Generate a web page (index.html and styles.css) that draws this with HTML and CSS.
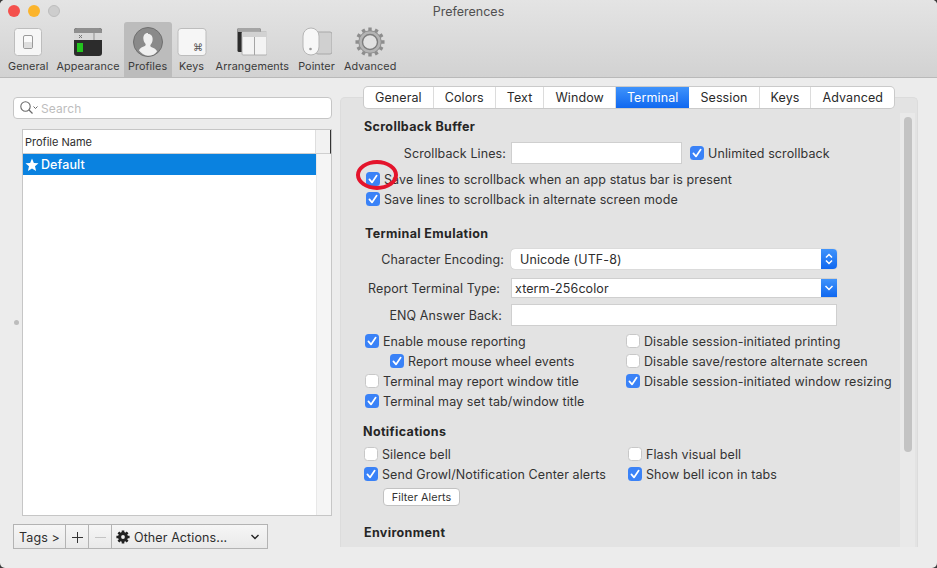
FILE: index.html
```html
<!DOCTYPE html>
<html lang="en">
  <head>
    <meta charset="UTF-8" />
    <meta name="viewport" content="width=device-width, initial-scale=1.0" />
    <title>Preferences</title>
    <link rel="stylesheet" href="styles.css">
  </head>
  <body>
    <svg class="defs" width="0" height="0">
      <symbol id="check" viewBox="0 0 14 14">
        <path d="M3.4 7.4 6 10.4 10.7 3.6" fill="none" stroke="#fff" stroke-width="1.7" stroke-linecap="round" stroke-linejoin="round" />
      </symbol>
    </svg>

    <div class="window">
      <header class="toolbar">
        <div class="titlebar">
          <div class="lights">
            <span class="light light-red"></span>
            <span class="light light-yellow"></span>
            <span class="light light-gray"></span>
          </div>
          <div class="title">Preferences</div>
        </div>
        <nav class="tools">
          <div class="tool tool-tight">
            <svg class="tool-icon" width="30" height="30" viewBox="0 0 30 30">
              <rect x="1.5" y="1.5" width="27" height="27" rx="3" fill="#f6f6f6" stroke="#bdbdbd" />
              <rect x="10.500" y="8.500" width="9" height="13" rx="1.500" fill="#fafafa" stroke="#9a9a9a" />
              <rect x="11" y="15" width="8" height="6" rx="1" fill="#dedede" />
            </svg>
            <span>General</span>
          </div>
          <div class="tool tool-tight">
            <svg class="tool-icon" width="30" height="30" viewBox="0 0 30 30">
              <rect x="1" y="1" width="28" height="28" rx="3" fill="#2c2c2c" />
              <path d="M1 4a3 3 0 0 1 3-3h22a3 3 0 0 1 3 3v2H1z" fill="#8f8f8f" />
              <rect x="1" y="6" width="28" height="7" fill="#d8d8d8" />
              <path d="M21 6v7" stroke="#8f8f8f" />
              <path d="M6 8l3 3M9 8l-3 3" stroke="#777" />
              <rect x="4" y="16" width="6" height="9" fill="#22c51e" />
            </svg>
            <span>Appearance</span>
          </div>
          <div class="tool tool-active">
            <svg class="tool-icon" width="30" height="30" viewBox="0 0 30 30">
              <circle cx="15" cy="15" r="14.5" fill="#8a8a8a" stroke="#6f6f6f" />
              <path d="M15 6c-3.4 0-5 2.7-4.6 6 .2 2 1 3.500 2 4.700.5.700.3 1.900-.5 2.300-2.300 1-4.900 1.700-6 4.200A13.800 13.800 0 0 0 15 28.800c3.900 0 7.300-1.600 9.100-4.600-1.100-2.500-3.700-3.200-6-4.200-.8-.4-1-1.600-.5-2.300 1-1.200 1.800-2.700 2-4.700.4-3.300-1.200-6-4.600-6z" fill="#efefef" />
            </svg>
            <span>Profiles</span>
          </div>
          <div class="tool tool-keys">
            <svg class="tool-icon" width="30" height="30" viewBox="0 0 30 30">
              <rect x="1" y="1.500" width="28" height="27" rx="3" fill="#f6f6f6" stroke="#bdbdbd" />
              <text class="key-glyph" x="21" y="24" text-anchor="middle">⌘</text>
            </svg>
            <span>Keys</span>
          </div>
          <div class="tool tool-arrange">
            <svg class="tool-icon" width="30" height="30" viewBox="0 0 30 30">
              <rect x="0.500" y="1" width="23" height="24" rx="1.500" fill="#2c2c2c" />
              <rect x="0.500" y="1" width="23" height="4" rx="1" fill="#a5a5a5" />
              <rect x="5" y="5" width="25" height="23" rx="1" fill="#f3f3f3" stroke="#b0b0b0" />
              <rect x="5" y="5" width="25" height="5" fill="#d2d2d2" />
              <path d="M17.500 10v18" stroke="#a5a5a5" />
            </svg>
            <span>Arrangements</span>
          </div>
          <div class="tool">
            <svg class="tool-icon" width="30" height="30" viewBox="0 0 30 30">
              <rect x="14" y="5" width="16" height="22" rx="2" fill="#d0d0d0" stroke="#a8a8a8" />
              <rect x="1" y="1" width="16" height="27" rx="8" fill="#f7f7f7" stroke="#b5b5b5" />
              <circle cx="8.500" cy="22" r="1.300" fill="#9a9a9a" />
            </svg>
            <span>Pointer</span>
          </div>
          <div class="tool">
            <svg class="tool-icon" width="32" height="30" viewBox="0 0 32 32">
              <g stroke="#8d8d8d" stroke-width="3.600">
                <path d="M16 .5v31M.5 16h31M8.300 2.600l15.400 26.800M23.700 2.600 8.300 29.400M2.600 8.300l26.800 15.400M29.400 8.300 2.600 23.700" />
              </g>
              <circle cx="16" cy="16" r="12" fill="#b4b4b4" stroke="#8d8d8d" />
              <circle cx="16" cy="16" r="8" fill="#e2e2e2" stroke="#7d7d7d" stroke-width="1.500" />
            </svg>
            <span>Advanced</span>
          </div>
        </nav>
      </header>

      <main class="content">
        <section class="profiles">
          <div class="search">
            <svg width="22" height="16" viewBox="0 0 22 16">
              <circle cx="6.500" cy="6.500" r="4.700" fill="none" stroke="#6a6a6a" stroke-width="1.100" />
              <path d="M10 10l3.500 3.500" stroke="#6a6a6a" stroke-width="1.200" />
              <path d="M14.500 6.500 16.500 8.500 18.500 6.500" fill="none" stroke="#6a6a6a" />
            </svg>
            <span>Search</span>
          </div>
          <div class="list-wrap">
            <div class="grip"><span class="grip-dot"></span></div>
            <div class="list">
              <div class="list-head">
                <div class="list-head-name">Profile Name</div>
                <div class="list-head-end"></div>
              </div>
              <div class="list-body">
                <div class="list-rows">
                  <div class="list-row">
                    <svg width="14" height="14" viewBox="0 0 14 14">
                      <path d="M7 .6l1.900 4.300 4.600.4-3.500 3 1.100 4.600L7 10.500l-4.100 2.400L4 8.300.5 5.300l4.600-.4z" fill="#fff" />
                    </svg>
                    <span>Default</span>
                  </div>
                </div>
                <div class="list-side"></div>
              </div>
            </div>
          </div>
          <div class="actions">
            <div class="action action-tags">Tags &gt;</div>
            <div class="action action-add">
              <svg width="13" height="13" viewBox="0 0 13 13"><path d="M6.500 1v11M1 6.500h11" stroke="#333" /></svg>
            </div>
            <div class="action action-remove">
              <svg width="13" height="13" viewBox="0 0 13 13"><path d="M1 6.500h11" stroke="#c4c4c4" /></svg>
            </div>
            <div class="action action-other">
              <svg width="14" height="14" viewBox="0 0 14 14">
                <g stroke="#222" stroke-width="2.600">
                  <path d="M7 .4v13.200M.4 7h13.200M2.400 2.400l9.200 9.200M11.600 2.400l-9.200 9.200" />
                </g>
                <circle cx="7" cy="7" r="4.900" fill="#222" />
                <circle cx="7" cy="7" r="1.900" fill="#efefef" />
              </svg>
              <span class="action-label">Other Actions...</span>
              <svg width="10" height="8" viewBox="0 0 10 8"><path d="M1.500 2 5 5.500 8.500 2" fill="none" stroke="#222" stroke-width="1.400" /></svg>
            </div>
          </div>
        </section>

        <section class="settings">
          <div class="tabs">
            <div class="tab">General</div>
            <div class="tab">Colors</div>
            <div class="tab">Text</div>
            <div class="tab">Window</div>
            <div class="tab tab-active">Terminal</div>
            <div class="tab">Session</div>
            <div class="tab">Keys</div>
            <div class="tab">Advanced</div>
          </div>
          <div class="panel">
            <div class="scroll-area">
              <div class="group group-scrollback">
                <h2>Scrollback Buffer</h2>
                <div class="field-row field-lines">
                  <label class="field-label">Scrollback Lines:</label>
                  <div class="input input-short"></div>
                  <div class="check check-unlimited">
                    <span class="box on"><svg><use href="#check" /></svg></span>
                    <span>Unlimited scrollback</span>
                  </div>
                </div>
                <div class="check check-save">
                  <span class="box on"><svg><use href="#check" /></svg></span>
                  <span>Save lines to scrollback when an app status bar is present</span>
                </div>
                <div class="check check-save">
                  <span class="box on"><svg><use href="#check" /></svg></span>
                  <span>Save lines to scrollback in alternate screen mode</span>
                </div>
              </div>

              <div class="group group-emulation">
                <h2>Terminal Emulation</h2>
                <div class="field-row field-encoding">
                  <label class="field-label">Character Encoding:</label>
                  <div class="select">
                    <span>Unicode (UTF-8)</span>
                    <span class="select-arrows">
                      <svg width="10" height="14" viewBox="0 0 10 14"><path d="M2 5.500 5 2.500l3 3M2 8.500l3 3 3-3" fill="none" stroke="#fff" stroke-width="1.500" /></svg>
                    </span>
                  </div>
                </div>
                <div class="field-row field-type">
                  <label class="field-label">Report Terminal Type:</label>
                  <div class="combo">
                    <span>xterm-256color</span>
                    <span class="combo-arrow">
                      <svg width="10" height="8" viewBox="0 0 10 8"><path d="M1.500 2 5 5.500 8.500 2" fill="none" stroke="#fff" stroke-width="1.500" /></svg>
                    </span>
                  </div>
                </div>
                <div class="field-row field-enq">
                  <label class="field-label">ENQ Answer Back:</label>
                  <div class="input input-long"></div>
                </div>
                <div class="check-cols check-cols-emulation">
                  <div class="check-col">
                    <div class="check"><span class="box on"><svg><use href="#check" /></svg></span><span>Enable mouse reporting</span></div>
                    <div class="check check-indent"><span class="box on"><svg><use href="#check" /></svg></span><span>Report mouse wheel events</span></div>
                    <div class="check"><span class="box"></span><span>Terminal may report window title</span></div>
                    <div class="check"><span class="box on"><svg><use href="#check" /></svg></span><span>Terminal may set tab/window title</span></div>
                  </div>
                  <div class="check-col">
                    <div class="check"><span class="box"></span><span>Disable session-initiated printing</span></div>
                    <div class="check"><span class="box"></span><span>Disable save/restore alternate screen</span></div>
                    <div class="check"><span class="box on"><svg><use href="#check" /></svg></span><span>Disable session-initiated window resizing</span></div>
                  </div>
                </div>
              </div>

              <div class="group group-notify">
                <h2>Notifications</h2>
                <div class="check-cols check-cols-notify">
                  <div class="check-col">
                    <div class="check"><span class="box"></span><span>Silence bell</span></div>
                    <div class="check"><span class="box on"><svg><use href="#check" /></svg></span><span>Send Growl/Notification Center alerts</span></div>
                  </div>
                  <div class="check-col">
                    <div class="check"><span class="box"></span><span>Flash visual bell</span></div>
                    <div class="check"><span class="box on"><svg><use href="#check" /></svg></span><span>Show bell icon in tabs</span></div>
                  </div>
                </div>
                <button class="filter-btn" type="button">Filter Alerts</button>
              </div>

              <div class="group group-env">
                <h2>Environment</h2>
              </div>
            </div>
            <div class="scrollbar"><div class="scrollbar-thumb"></div></div>
          </div>
        </section>

        <!-- red marker drawn over the first checkbox -->
        <div class="marker"></div>
      </main>
    </div>
  </body>
</html>
```

FILE: styles.css
```css
* {
  box-sizing: border-box;
}

html,
body {
  margin: 0;
  padding: 0;
  height: 100%;
  overflow: hidden;
}

body {
  background-color: #3a3a3a;
  font-family: Inter, "Liberation Sans", sans-serif;
  font-size: 12.5px;
  letter-spacing: 0.1px;
  color: #2e2e2e;
}

.defs {
  position: absolute;
}

.window {
  height: 568px;
  display: flex;
  flex-direction: column;
  background-color: #ececec;
  border-radius: 5px;
  overflow: hidden;
}

/* toolbar */

.toolbar {
  height: 78px;
  flex: none;
  background: linear-gradient(#e4e4e4, #d2d2d2);
  border-bottom: 1px solid #b9b9b9;
}

.titlebar {
  height: 22px;
  display: flex;
  align-items: center;
  justify-content: center;
}

.lights {
  position: absolute;
  left: 8px;
  top: 5px;
  display: flex;
  gap: 8px;
}

.light {
  width: 12px;
  height: 12px;
  border-radius: 50%;
}

.light-red {
  background-color: #f4504c;
}

.light-yellow {
  background-color: #fbb42c;
}

.light-gray {
  background-color: #cdcdcd;
  border: 1px solid #bdbdbd;
}

.title {
  color: #505050;
  font-size: 12.5px;
  letter-spacing: 0;
}

.tools {
  height: 55px;
  display: flex;
  padding-left: 4px;
  gap: 1px;
}

.tool {
  padding: 5px 4px 0;
  display: flex;
  flex-direction: column;
  align-items: center;
  font-size: 10.8px;
  color: #3a3a3a;
  white-space: nowrap;
}

.tool-icon {
  display: block;
  margin-bottom: 3px;
}

.tool-tight {
  padding-right: 3px;
}

.tool-active {
  width: 48px;
  background-color: #bcbcbc;
  border-radius: 3px 3px 0 0;
}

.tool-keys {
  padding: 5px 3px 0 4px;
}

.tool-arrange {
  padding: 5px 4px 0 5px;
}

.key-glyph {
  font-family: "DejaVu Sans", sans-serif;
  font-size: 10px;
  fill: #555;
}

/* main area */

.content {
  flex: 1;
  display: flex;
  min-height: 0;
  position: relative;
}

.profiles {
  width: 340px;
  flex: none;
  padding: 19px 8px 0 13px;
}

.search {
  height: 22px;
  display: flex;
  align-items: center;
  padding-left: 5px;
  background-color: #fff;
  border: 1px solid #c6c6c6;
  border-radius: 4px;
  font-size: 12px;
  color: #bdbdbd;
}

.list-wrap {
  display: flex;
  margin-top: 10px;
  height: 387px;
}

.grip {
  width: 9px;
  display: flex;
  align-items: center;
  padding-left: 1px;
}

.grip-dot {
  width: 5px;
  height: 5px;
  margin-top: -1px;
  border-radius: 50%;
  background-color: #bcbcbc;
}

.list {
  flex: 1;
  display: flex;
  flex-direction: column;
  background-color: #fff;
  border: 1px solid #c6c6c6;
}

.list-head {
  height: 24px;
  flex: none;
  display: flex;
  border-bottom: 1px solid #cfcfcf;
  border-right: 1px solid #333;
  font-size: 11px;
  letter-spacing: 0;
}

.list-head-name {
  flex: 1;
  display: flex;
  align-items: center;
  padding-left: 2px;
}

.list-head-end {
  width: 15px;
  background-color: #f2f2f2;
  border-left: 1px solid #dedede;
}

.list-body {
  flex: 1;
  display: flex;
}

.list-rows {
  flex: 1;
}

.list-row {
  height: 21px;
  display: flex;
  align-items: center;
  gap: 2px;
  padding-left: 2px;
  background-color: #0a82e0;
  color: #fff;
  font-weight: 500;
}

.list-side {
  width: 15px;
  background-color: #f5f5f5;
  border-left: 1px solid #e8e8e8;
}

.actions {
  display: flex;
  margin-top: 8px;
  width: 255px;
  height: 25px;
  border: 1px solid #b3b3b3;
  background: linear-gradient(#f6f6f6, #e9e9e9);
}

.action {
  display: flex;
  align-items: center;
  justify-content: center;
  padding-top: 1px;
  border-right: 1px solid #b3b3b3;
}

.action-tags {
  width: 52px;
}

.action-add {
  width: 23px;
}

.action-remove {
  width: 23px;
}

.action-other {
  flex: 1;
  border-right: none;
  padding: 1px 7px 0 4px;
  justify-content: flex-start;
  gap: 4px;
}

.action-label {
  flex: 1;
}

/* right side */

.settings {
  flex: 1;
  padding: 9px 19px 0 0;
  display: flex;
  flex-direction: column;
}

.tabs {
  display: flex;
  height: 21px;
  flex: none;
  margin: 0 0 -11px 24px;
  width: 530px;
  position: relative;
  z-index: 1;
  background-color: #fff;
  border-radius: 4px;
  box-shadow: 0 0 0 1px #cacaca;
}

.tab {
  display: flex;
  align-items: center;
  justify-content: center;
  flex: auto;
  border-right: 1px solid #dcdcdc;
  color: #2a2a2a;
}

.tab:last-child {
  border-right: none;
}

.tab-active {
  background: linear-gradient(#3f93fb, #1068f0);
  color: #fff;
  border-right: none;
}

.panel {
  height: 450px;
  flex: none;
  display: flex;
  background-color: #e3e3e3;
  border: 1px solid #dcdcdc;
  border-bottom: none;
  border-radius: 5px 5px 0 0;
  overflow: hidden;
}

.scroll-area {
  flex: 1;
  padding-top: 19px;
  overflow: hidden;
}

.scrollbar {
  width: 15px;
  margin: 15px 2px 0 0;
  padding: 4px 3px 0 4px;
  background-color: #e9e9e9;
}

.scrollbar-thumb {
  height: 335px;
  background-color: #c3c3c3;
  border-radius: 4px;
}

h2 {
  margin: 0;
  height: 18px;
  line-height: 20px;
  font-size: 12.5px;
  font-weight: 700;
  letter-spacing: 0.35px;
  color: #262626;
}

.group-scrollback {
  padding-left: 23px;
}

.group-emulation {
  padding-left: 24px;
  margin-top: 15px;
}

.group-notify {
  padding-left: 22px;
  margin-top: 11px;
}

.group-env {
  padding-left: 23px;
  margin-top: 17px;
}

.field-row {
  display: flex;
  align-items: center;
}

.field-label {
  flex: none;
  text-align: right;
  color: #333;
}

.field-lines {
  height: 22px;
  margin-top: 7px;
  margin-bottom: 5px;
}

.field-lines .field-label {
  width: 142px;
  margin-right: 5px;
}

.field-encoding {
  height: 20px;
  margin-top: 7px;
}

.field-encoding .field-label {
  width: 139px;
  margin-right: 7px;
}

.field-type {
  height: 20px;
  margin-top: 9px;
}

.field-type .field-label {
  width: 135px;
  margin-right: 11px;
}

.field-enq {
  height: 22px;
  margin-top: 6px;
  margin-bottom: 5px;
}

.field-enq .field-label {
  width: 137px;
  margin-right: 9px;
}

.input {
  height: 22px;
  background-color: #fff;
  border: 1px solid #cfcfcf;
}

.input-short {
  width: 171px;
}

.input-long {
  width: 326px;
}

.select,
.combo {
  width: 326px;
  height: 20px;
  display: flex;
  align-items: center;
  background-color: #fff;
  overflow: hidden;
}

.select {
  padding-left: 9px;
  border-radius: 4px;
  box-shadow: 0 0 1px #9a9a9a;
}

.combo {
  padding-left: 3px;
  border: 1px solid #cfcfcf;
  border-right: none;
}

.select span:first-child,
.combo span:first-child {
  flex: 1;
}

.select-arrows,
.combo-arrow {
  width: 16px;
  height: 100%;
  display: flex;
  align-items: center;
  justify-content: center;
  background: linear-gradient(#3f93fb, #1068f0);
}

.check {
  height: 20px;
  display: flex;
  align-items: center;
  gap: 4px;
  white-space: nowrap;
  color: #333;
}

.check-save {
  margin-left: 2px;
}

.check-unlimited {
  margin-left: 8px;
}

.check-indent {
  margin-left: 25px;
}

.box {
  width: 14px;
  height: 14px;
  flex: none;
  display: block;
  background-color: #fff;
  border: 1px solid #c8c8c8;
  border-radius: 3.5px;
}

.box.on {
  background-color: #3a82f7;
  border: none;
}

.box svg {
  display: block;
  width: 14px;
  height: 14px;
}

.check-cols {
  display: flex;
}

.check-cols-emulation .check-col:first-child {
  width: 261px;
}

.check-cols-notify {
  margin-top: 4px;
  padding-left: 1px;
}

.check-cols-notify .check-col:first-child {
  width: 264px;
}

.filter-btn {
  display: block;
  width: 77px;
  height: 18px;
  margin: 4px 0 0 20px;
  padding: 0;
  background-color: #fff;
  border: 1px solid #c2c2c2;
  border-radius: 4px;
  font-family: inherit;
  font-size: 10.8px;
  letter-spacing: inherit;
  color: #333;
}

.marker {
  position: absolute;
  left: 356px;
  top: 82px;
  width: 42px;
  height: 30px;
  border: 4px solid #e4142c;
  border-radius: 50%;
}
```
